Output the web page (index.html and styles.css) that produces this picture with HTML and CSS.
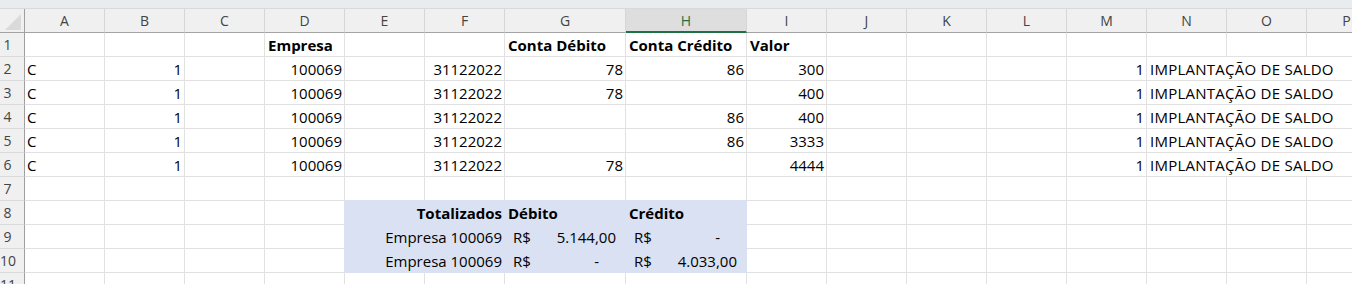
FILE: index.html
```html
<!DOCTYPE html>
<html lang="pt-BR">
<head>
<meta charset="utf-8">
<title>Planilha</title>
<link rel="stylesheet" href="styles.css">
</head>
<body>
<div class="sheet">
  <div class="topbar"></div>
  <div class="row head">
    <div class="corner"><div class="tri"></div></div>
    <div class="col">A</div><div class="col">B</div><div class="col">C</div><div class="col">D</div>
    <div class="col">E</div><div class="col">F</div><div class="col">G</div><div class="col active">H</div>
    <div class="col">I</div><div class="col">J</div><div class="col">K</div><div class="col">L</div>
    <div class="col">M</div><div class="col">N</div><div class="col">O</div><div class="col">P</div>
  </div>

  <div class="row">
    <div class="rn">1</div>
    <div class="c"></div><div class="c"></div><div class="c"></div><div class="c b">Empresa</div>
    <div class="c"></div><div class="c"></div><div class="c b">Conta Débito</div><div class="c b">Conta Crédito</div>
    <div class="c b">Valor</div><div class="c"></div><div class="c"></div><div class="c"></div>
    <div class="c"></div><div class="c"></div><div class="c"></div><div class="c"></div>
  </div>

  <div class="row">
    <div class="rn">2</div>
    <div class="c">C</div><div class="c r">1</div><div class="c"></div><div class="c r">100069</div>
    <div class="c"></div><div class="c r">31122022</div><div class="c r">78</div><div class="c r">86</div>
    <div class="c r">300</div><div class="c"></div><div class="c"></div><div class="c"></div>
    <div class="c r">1</div><div class="c span3">IMPLANTAÇÃO DE SALDO</div>
  </div>

  <div class="row">
    <div class="rn">3</div>
    <div class="c">C</div><div class="c r">1</div><div class="c"></div><div class="c r">100069</div>
    <div class="c"></div><div class="c r">31122022</div><div class="c r">78</div><div class="c r"></div>
    <div class="c r">400</div><div class="c"></div><div class="c"></div><div class="c"></div>
    <div class="c r">1</div><div class="c span3">IMPLANTAÇÃO DE SALDO</div>
  </div>

  <div class="row">
    <div class="rn">4</div>
    <div class="c">C</div><div class="c r">1</div><div class="c"></div><div class="c r">100069</div>
    <div class="c"></div><div class="c r">31122022</div><div class="c r"></div><div class="c r">86</div>
    <div class="c r">400</div><div class="c"></div><div class="c"></div><div class="c"></div>
    <div class="c r">1</div><div class="c span3">IMPLANTAÇÃO DE SALDO</div>
  </div>

  <div class="row">
    <div class="rn">5</div>
    <div class="c">C</div><div class="c r">1</div><div class="c"></div><div class="c r">100069</div>
    <div class="c"></div><div class="c r">31122022</div><div class="c r"></div><div class="c r">86</div>
    <div class="c r">3333</div><div class="c"></div><div class="c"></div><div class="c"></div>
    <div class="c r">1</div><div class="c span3">IMPLANTAÇÃO DE SALDO</div>
  </div>

  <div class="row">
    <div class="rn">6</div>
    <div class="c">C</div><div class="c r">1</div><div class="c"></div><div class="c r">100069</div>
    <div class="c"></div><div class="c r">31122022</div><div class="c r">78</div><div class="c r"></div>
    <div class="c r">4444</div><div class="c"></div><div class="c"></div><div class="c"></div>
    <div class="c r">1</div><div class="c span3">IMPLANTAÇÃO DE SALDO</div>
  </div>

  <div class="row">
    <div class="rn">7</div>
    <div class="c"></div><div class="c"></div><div class="c"></div><div class="c"></div>
    <div class="c above"></div><div class="c above"></div><div class="c above"></div><div class="c above"></div>
    <div class="c"></div><div class="c"></div><div class="c"></div><div class="c"></div>
    <div class="c"></div><div class="c"></div><div class="c"></div><div class="c"></div>
  </div>

  <div class="row">
    <div class="rn">8</div>
    <div class="c"></div><div class="c"></div><div class="c"></div><div class="c beside"></div>
    <div class="c fill"></div><div class="c fill r b">Totalizados</div><div class="c fill b">Débito</div><div class="c fill b">Crédito</div>
    <div class="c"></div><div class="c"></div><div class="c"></div><div class="c"></div>
    <div class="c"></div><div class="c"></div><div class="c"></div><div class="c"></div>
  </div>

  <div class="row">
    <div class="rn">9</div>
    <div class="c"></div><div class="c"></div><div class="c"></div><div class="c beside"></div>
    <div class="c fill"></div><div class="c fill r">Empresa 100069</div>
    <div class="c fill acct"><span>R$</span><span>5.144,00</span></div>
    <div class="c fill acct"><span>R$</span><span class="dash">-</span></div>
    <div class="c"></div><div class="c"></div><div class="c"></div><div class="c"></div>
    <div class="c"></div><div class="c"></div><div class="c"></div><div class="c"></div>
  </div>

  <div class="row">
    <div class="rn">10</div>
    <div class="c"></div><div class="c"></div><div class="c"></div><div class="c beside"></div>
    <div class="c fill"></div><div class="c fill r">Empresa 100069</div>
    <div class="c fill acct"><span>R$</span><span class="dash">-</span></div>
    <div class="c fill acct"><span>R$</span><span>4.033,00</span></div>
    <div class="c"></div><div class="c"></div><div class="c"></div><div class="c"></div>
    <div class="c"></div><div class="c"></div><div class="c"></div><div class="c"></div>
  </div>

  <div class="row">
    <div class="rn">11</div>
    <div class="c"></div><div class="c"></div><div class="c"></div><div class="c"></div>
    <div class="c"></div><div class="c"></div><div class="c"></div><div class="c"></div>
    <div class="c"></div><div class="c"></div><div class="c"></div><div class="c"></div>
    <div class="c"></div><div class="c"></div><div class="c"></div><div class="c"></div>
  </div>
</div>
</body>
</html>
```

FILE: styles.css
```css
html, body {
  margin: 0;
  padding: 0;
  background: #ffffff;
  overflow: hidden;
}

.sheet {
  width: 1386px;
  font-family: "Open Sans", "Liberation Sans", sans-serif;
  font-size: 15px;
  color: #000;
}

.topbar {
  height: 8px;
  background: #e9ecef;
  border-bottom: 1px solid #d6d9dd;
}

.row {
  display: grid;
  grid-template-columns: 25px repeat(6, 80px) 121px 121px repeat(7, 80px) 80px;
  height: 24px;
}

.row > div {
  box-sizing: border-box;
  height: 24px;
}

/* column header row */
.corner {
  background: #f0f0f0;
  border-right: 1px solid #9f9f9f;
  border-bottom: 1px solid #a3a3a3;
  display: flex;
  justify-content: flex-end;
  align-items: flex-end;
  padding: 0 3px 2px 0;
}

.tri {
  width: 16px;
  height: 16px;
  background: #dadada;
  clip-path: polygon(100% 0, 100% 100%, 0 100%);
}

.col {
  background: #f0f0f0;
  border-right: 1px solid #d6d6d6;
  border-bottom: 1px solid #a3a3a3;
  text-align: center;
  font-size: 14px;
  line-height: 23px;
  color: #444;
}

.col.active {
  background: #dedede;
  color: #1e7145;
  border-bottom: 2px solid #1e7145;
}

/* row numbers */
.rn {
  background: #f0f0f0;
  border-right: 1px solid #9f9f9f;
  border-bottom: 1px solid #dadada;
  font-size: 14px;
  line-height: 22px;
  padding: 1px 9px 0 0;
  text-align: center;
  color: #444;
  white-space: nowrap;
}

/* cells */
.c {
  border-right: 1px solid #e1e1e1;
  border-bottom: 1px solid #e1e1e1;
  padding: 1px 2px 0 2px;
  line-height: 22px;
  white-space: nowrap;
}

.c.r {
  display: flex;
  justify-content: flex-end;
}
.c.b { font-weight: 700; padding-left: 3px; }
.c.r.b { padding-right: 2px; }

.c.span3 {
  grid-column: span 3;
  padding-left: 3px;
  letter-spacing: 0.25px;
}

.c.above { border-bottom-color: #dae1f3; }
.c.beside { border-right-color: #dae1f3; }

.c.fill {
  background: #dae1f3;
  border-right-color: #dae1f3;
  border-bottom-color: #dae1f3;
}

.c.acct {
  display: flex;
  justify-content: space-between;
  padding: 1px 9px 0 8px;
}

.dash { padding-right: 17px; }
```
